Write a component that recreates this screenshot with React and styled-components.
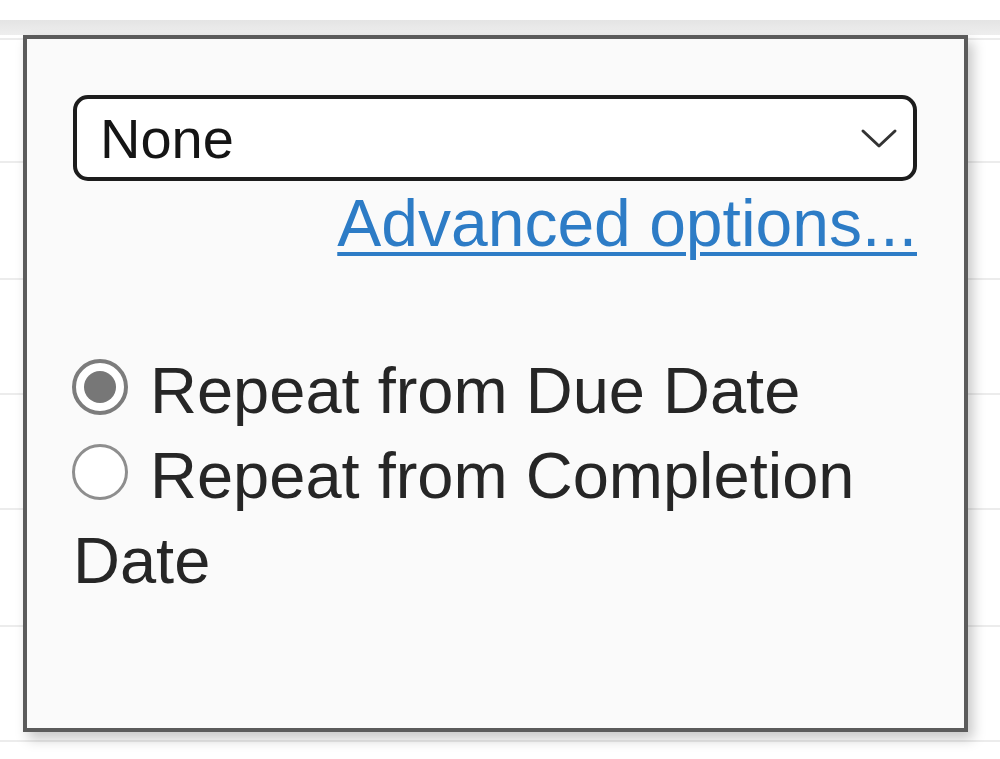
import React from 'react'
import styled, { createGlobalStyle } from 'styled-components'

const GlobalStyle = createGlobalStyle`
  html, body {
    margin: 0;
    padding: 0;
    background: #ffffff;
  }
  body {
    font-family: "Liberation Sans", Arial, Helvetica, sans-serif;
  }
`

// BACKGROUND TABLE
const Page = styled.div`
  position: relative;
  width: 1000px;
  height: 759px;
  overflow: hidden;
  background: #fff;
`

const TopBand = styled.div`
  margin-top: 20px;
  height: 15px;
  background: linear-gradient(#e4e4e4, #eeeeee);
`

const Row = styled.div`
  height: ${p => p.h}px;
  box-sizing: border-box;
  border-bottom: 2px solid #ececec;
`

// POPUP
const Popup = styled.div`
  position: absolute;
  left: 23px;
  top: 35px;
  width: 945px;
  height: 697px;
  box-sizing: border-box;
  border: 4px solid #5b5b5b;
  background: #fafafa;
  box-shadow: 5px 7px 12px rgba(0, 0, 0, 0.22);
  padding: 56px 47px 0 46px;
`

const SelectBox = styled.div`
  display: flex;
  align-items: center;
  justify-content: space-between;
  height: 86px;
  box-sizing: border-box;
  border: 4px solid #1c1c1c;
  border-radius: 15px;
  background: #fff;
  padding: 0 14px 0 23px;
  font-size: 56px;
  color: #151515;
`

const SelectText = styled.span`
  line-height: 1;
  margin-top: 2px;
`

const Chevron = () => (
  <svg width="40" height="24" viewBox="0 0 40 24" fill="none">
    <path d="M4 5 L20 20 L36 5" stroke="#333" strokeWidth="3" strokeLinecap="round" strokeLinejoin="round" />
  </svg>
)

const LinkRow = styled.div`
  text-align: right;
  font-size: 66px;
  line-height: 85px;
`

const Link = styled.a`
  color: #2d7cc6;
  text-decoration: underline;
  text-decoration-thickness: 4px;
  text-underline-offset: 6px;
  cursor: pointer;
`

const Options = styled.div`
  margin-top: 82px;
`

const Option = styled.label`
  display: block;
  font-size: 65px;
  line-height: 85px;
  color: #262626;
`

const Radio = styled.span`
  display: inline-block;
  vertical-align: top;
  margin: 11px 22px 0 -1px;
  width: 56px;
  height: 56px;
  box-sizing: border-box;
  border-radius: 50%;
  border: ${p => (p.checked ? '4px solid #7c7c7c' : '3px solid #8e8e8e')};
  background: #fff;
  position: relative;

  &::after {
    content: '';
    display: ${p => (p.checked ? 'block' : 'none')};
    position: absolute;
    left: 8px;
    top: 8px;
    width: 32px;
    height: 32px;
    border-radius: 50%;
    background: #777;
  }
`

const rows = [5, 123, 117, 115, 115, 117, 115]

export default function App() {
  return (
    <>
      <GlobalStyle />
      <Page>
        <TopBand />
        {rows.map((h, i) => (
          <Row key={i} h={h} />
        ))}
        <Popup>
          <SelectBox>
            <SelectText>None</SelectText>
            <Chevron />
          </SelectBox>
          <LinkRow>
            <Link>Advanced options...</Link>
          </LinkRow>
          <Options>
            <Option>
              <Radio checked />
              Repeat from Due Date
            </Option>
            <Option>
              <Radio />
              Repeat from Completion Date
            </Option>
          </Options>
        </Popup>
      </Page>
    </>
  )
}
